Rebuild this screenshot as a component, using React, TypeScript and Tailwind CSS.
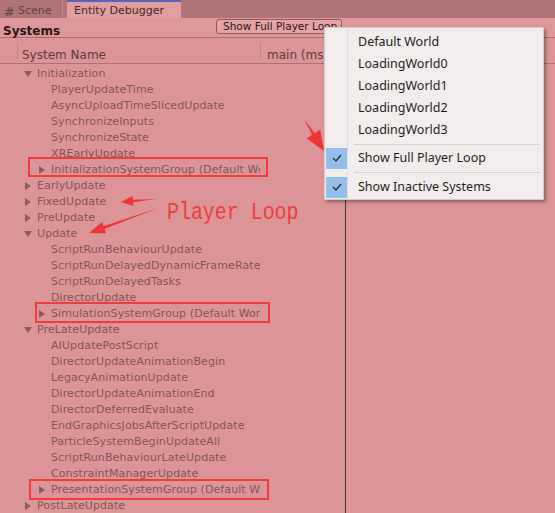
type Row = { label: string; level: 1 | 2; arrow?: "down" | "right" };

const rows: Row[] = [
  { label: "Initialization", level: 1, arrow: "down" },
  { label: "PlayerUpdateTime", level: 2 },
  { label: "AsyncUploadTimeSlicedUpdate", level: 2 },
  { label: "SynchronizeInputs", level: 2 },
  { label: "SynchronizeState", level: 2 },
  { label: "XREarlyUpdate", level: 2 },
  { label: "InitializationSystemGroup (Default World)", level: 2, arrow: "right" },
  { label: "EarlyUpdate", level: 1, arrow: "right" },
  { label: "FixedUpdate", level: 1, arrow: "right" },
  { label: "PreUpdate", level: 1, arrow: "right" },
  { label: "Update", level: 1, arrow: "down" },
  { label: "ScriptRunBehaviourUpdate", level: 2 },
  { label: "ScriptRunDelayedDynamicFrameRate", level: 2 },
  { label: "ScriptRunDelayedTasks", level: 2 },
  { label: "DirectorUpdate", level: 2 },
  { label: "SimulationSystemGroup (Default World)", level: 2, arrow: "right" },
  { label: "PreLateUpdate", level: 1, arrow: "down" },
  { label: "AIUpdatePostScript", level: 2 },
  { label: "DirectorUpdateAnimationBegin", level: 2 },
  { label: "LegacyAnimationUpdate", level: 2 },
  { label: "DirectorUpdateAnimationEnd", level: 2 },
  { label: "DirectorDeferredEvaluate", level: 2 },
  { label: "EndGraphicsJobsAfterScriptUpdate", level: 2 },
  { label: "ParticleSystemBeginUpdateAll", level: 2 },
  { label: "ScriptRunBehaviourLateUpdate", level: 2 },
  { label: "ConstraintManagerUpdate", level: 2 },
  { label: "PresentationSystemGroup (Default World)", level: 2, arrow: "right" },
  { label: "PostLateUpdate", level: 1, arrow: "right" },
];

function Tri({ dir }: { dir: "down" | "right" }) {
  return (
    <svg width="8" height="8" viewBox="0 0 8 8" className="shrink-0">
      {dir === "down" ? (
        <polygon points="0,1 8,1 4,7" fill="#8a5c5c" />
      ) : (
        <polygon points="1,0 7,4 1,8" fill="#8a5c5c" />
      )}
    </svg>
  );
}

// tapered annotation arrow, thin at the tail, head at the tip
function arrowPoints(tx: number, ty: number, hx: number, hy: number, headLen: number, headW: number, shaft: number) {
  const dx = hx - tx;
  const dy = hy - ty;
  const len = Math.hypot(dx, dy);
  const ux = dx / len;
  const uy = dy / len;
  const nx = -uy;
  const ny = ux;
  const bx = hx - ux * headLen;
  const by = hy - uy * headLen;
  const p = (x: number, y: number) => `${x.toFixed(1)},${y.toFixed(1)}`;
  return [
    p(tx, ty),
    p(bx + nx * shaft, by + ny * shaft),
    p(bx + nx * headW, by + ny * headW),
    p(hx, hy),
    p(bx - nx * headW, by - ny * headW),
    p(bx - nx * shaft, by - ny * shaft),
  ].join(" ");
}

function Check() {
  return (
    <div className="w-[21px] h-[21px] bg-[#93bfe9] flex items-center justify-center">
      <svg width="10" height="8" viewBox="0 0 10 8">
        <polyline points="1,4 4,7 9,1" fill="none" stroke="#2c3440" strokeWidth="1.4" />
      </svg>
    </div>
  );
}

export default function App() {
  const ui = { fontFamily: '"DejaVu Sans", Verdana, sans-serif' };
  const menuFont = { fontFamily: '"Noto Sans", "Open Sans", sans-serif' };

  return (
    <div className="relative w-[555px] h-[513px] overflow-hidden bg-[#dc9496]" style={ui}>
      {/* tab strip */}
      <div className="h-[18px] bg-[#b07476] flex items-stretch">
        <div className="w-[63px] flex items-center gap-[3px] pl-[4px] pt-[5px] text-[11px] text-[#5e4343] border-r border-[#c08888]">
          <span className="text-[13px] leading-none">#</span>
          <span>Scene</span>
        </div>
        <div className="ml-[4px] w-[114px] bg-[#e29d9e] border-t-2 border-[#5a63b8] flex items-center pl-[7px] pt-[3px] text-[11px] text-[#3e2a2a]">
          Entity Debugger
        </div>
      </div>

      {/* toolbar */}
      <div className="h-[20px] flex items-start border-b border-[#a86c6c] bg-[#de9899]">
        <div className="w-[216px] pl-[3px] pt-[6px] text-[12px] leading-[14px] font-bold text-[#2a1616]">Systems</div>
        <div className="mt-[1px] w-[126px] h-[15px] pl-[6px] rounded-[3px] border border-[#8a5a5a] bg-[#e6a3a4] flex items-center text-[10.5px] text-[#2a1616] whitespace-nowrap overflow-hidden">
          Show Full Player Loop ▾
        </div>
      </div>

      {/* column header */}
      <div className="h-[26px] flex items-stretch border-b border-[#a87070] text-[12px] leading-[14px] text-[#5a3a3a]">
        <div className="w-[18px] border-r border-[#c08686] my-[4px]" />
        <div className="w-[243px] pt-[6px] pl-[4px] border-r border-[#c08686] mt-[4px] mb-[3px]">System Name</div>
        <div className="w-[85px] pt-[10px] pl-[6px] whitespace-nowrap overflow-hidden">main (ms)</div>
      </div>

      {/* tree + right column */}
      <div className="flex">
        <div className="w-[260px] overflow-hidden pt-[2px]">
          {rows.map((r) => (
            <div
              key={r.label}
              className={`h-[16px] flex items-center whitespace-nowrap text-[11px] tracking-[0.1px] text-[#825454] ${r.level === 1 ? "pl-[24px]" : "pl-[38px]"}`}
            >
              <div className="w-[13px] shrink-0">{r.arrow && <Tri dir={r.arrow} />}</div>
              <span>{r.label}</span>
            </div>
          ))}
        </div>
        <div className="w-[86px] border-r border-[#4a2e2e] h-[460px]" />
      </div>

      {/* annotations */}
      <div className="absolute left-[28px] top-[157px] w-[240px] h-[20px] border-2 border-[#f03b3b]" />
      <div className="absolute left-[35px] top-[302px] w-[235px] h-[21px] border-2 border-[#f03b3b]" />
      <div className="absolute left-[29px] top-[479px] w-[240px] h-[21px] border-2 border-[#f03b3b]" />
      <svg className="absolute left-0 top-0" width="555" height="513">
        <polygon points={arrowPoints(156, 199, 121, 202, 12, 5, 1.2)} fill="#ee3434" />
        <polygon points={arrowPoints(158, 208, 89, 233, 16, 6, 1.4)} fill="#ee3434" />
        <polygon points={arrowPoints(304, 119, 324, 151, 20, 8, 1.5)} fill="#ee3434" />
      </svg>
      <div
        className="absolute left-[167px] top-[201px] text-[24px] leading-none text-[#ec3d3d] whitespace-nowrap origin-left scale-x-[0.83]"
        style={{ fontFamily: '"Liberation Mono", monospace' }}
      >
        Player Loop
      </div>

      {/* dropdown menu */}
      <div
        className="absolute left-[324px] top-[27px] w-[220px] h-[173px] bg-[#f2eded] border border-[#cfc9c9] shadow-[2px_2px_3px_rgba(0,0,0,0.35)] text-[12.5px] text-[#1e1e1e] pt-[3px]"
        style={menuFont}
      >
        <div className="absolute left-[22px] top-0 bottom-0 w-px bg-[#e2dcdc]" />
        {["Default World", "LoadingWorld0", "LoadingWorld1", "LoadingWorld2", "LoadingWorld3"].map((w) => (
          <div key={w} className="h-[22px] flex items-center pl-[33px]">
            {w}
          </div>
        ))}
        <div className="h-[6px] flex items-center pl-[29px] pr-[3px]">
          <div className="h-px w-full bg-[#d6d0d0]" />
        </div>
        <div className="h-[22px] flex items-center pl-[1px]">
          <Check />
          <span className="pl-[11px]">Show Full Player Loop</span>
        </div>
        <div className="h-[7px] flex items-center pl-[29px] pr-[3px]">
          <div className="h-px w-full bg-[#d6d0d0]" />
        </div>
        <div className="h-[22px] flex items-center pl-[1px]">
          <Check />
          <span className="pl-[11px]">Show Inactive Systems</span>
        </div>
      </div>
    </div>
  );
}
